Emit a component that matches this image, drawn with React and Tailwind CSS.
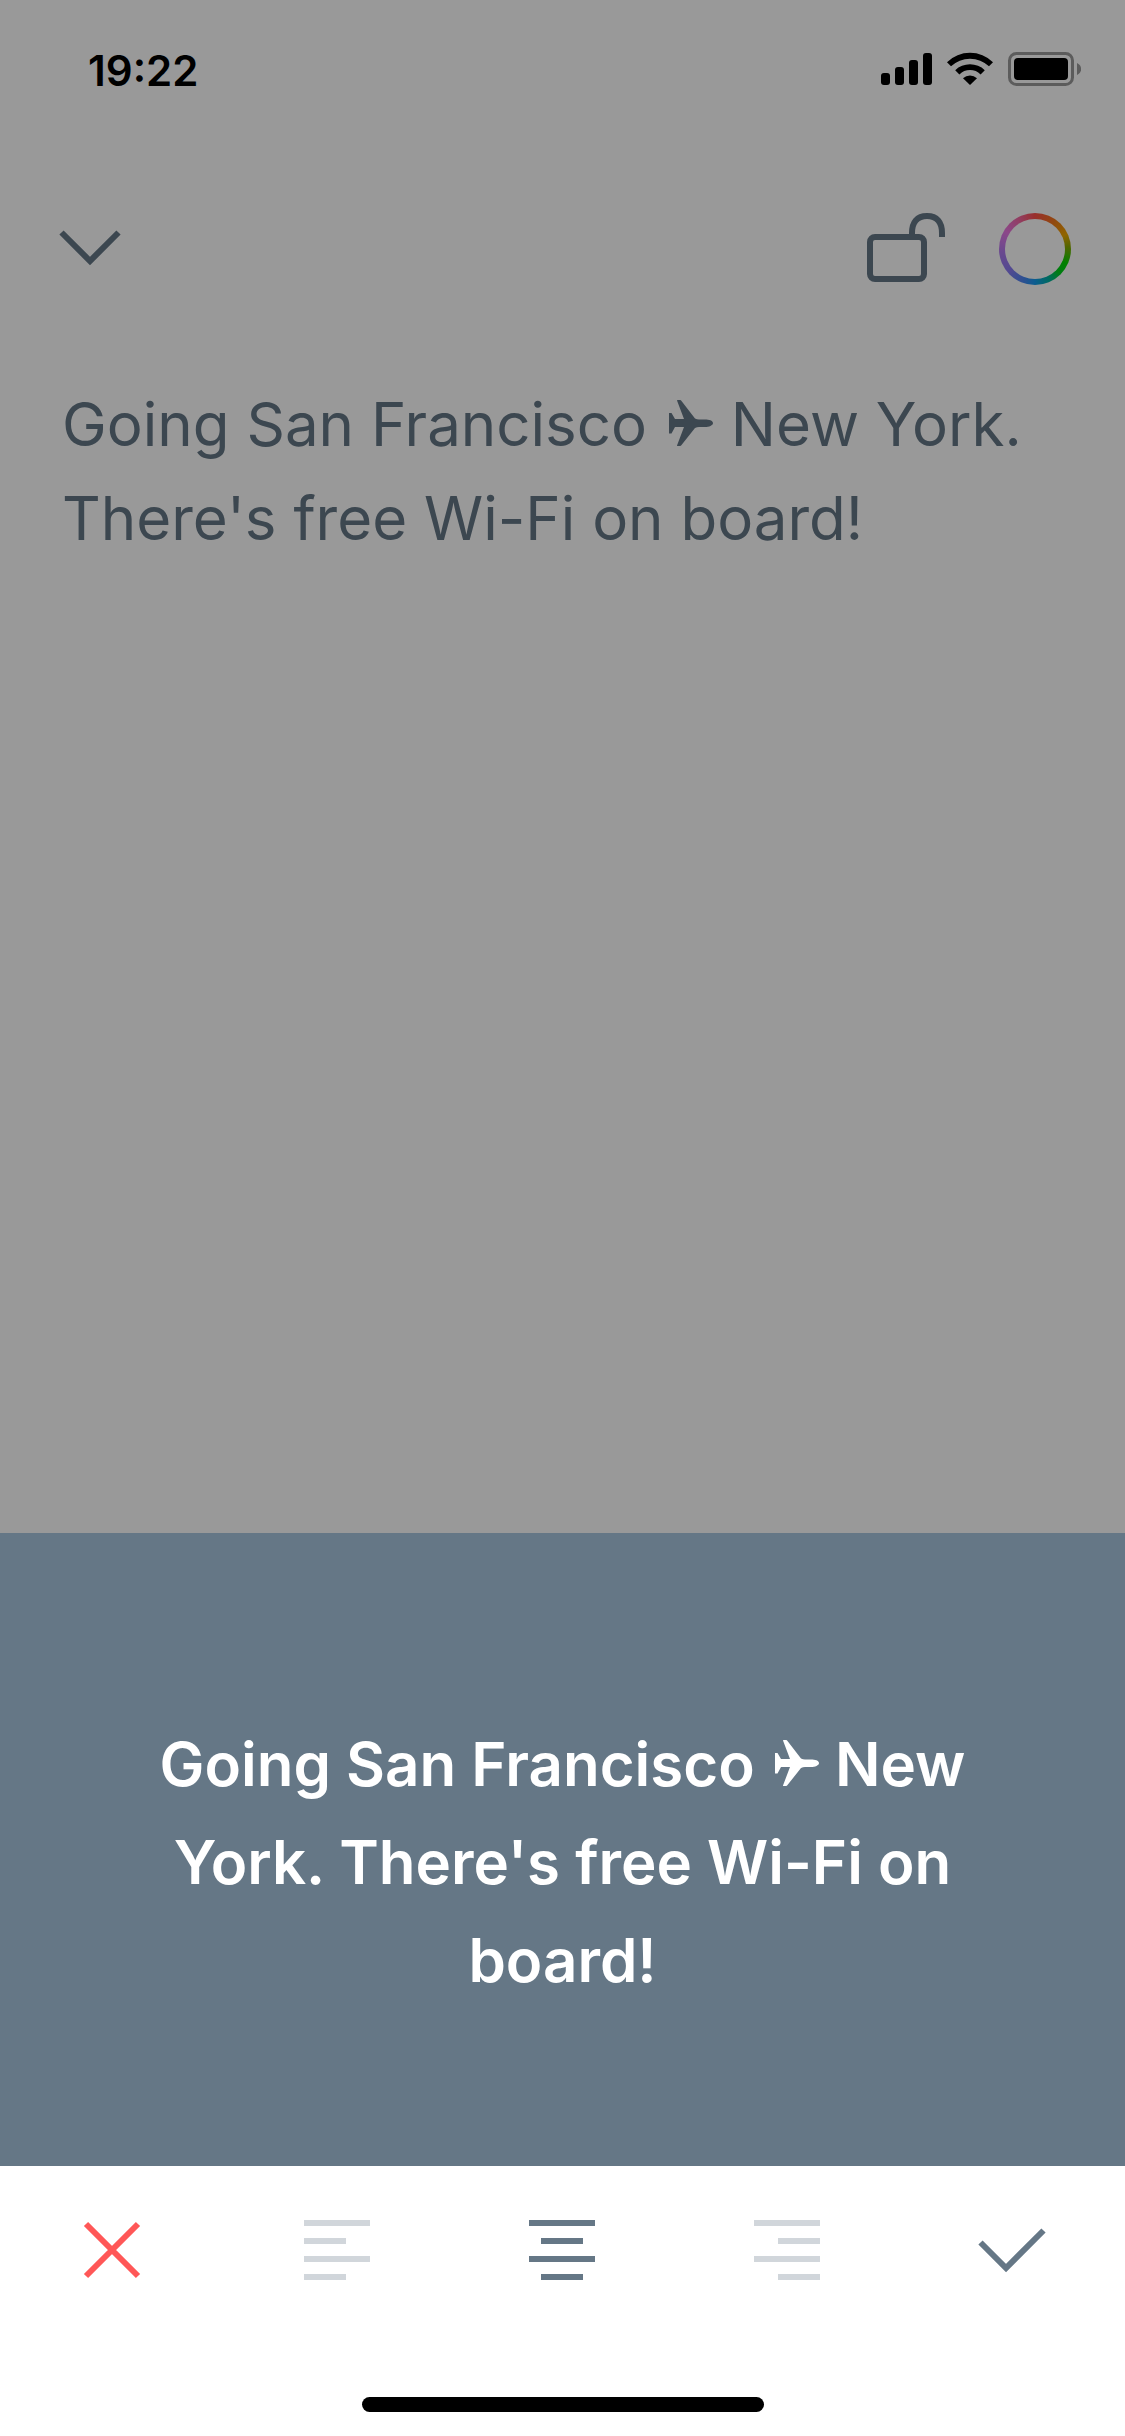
import { useState } from 'react';
import clsx from 'clsx';

const NOTE = "Going San Francisco ✈ New York. There's free Wi-Fi on board!";

const ALIGNMENTS = [
    { name: 'left', label: 'Align left', shortX: 1, text: 'text-left' },
    { name: 'center', label: 'Align center', shortX: 13, text: 'text-center' },
    { name: 'right', label: 'Align right', shortX: 25, text: 'text-right' },
];

const StatusBar = () => (
    <div className="flex items-center justify-between pt-11 pl-[88px] pr-11">
        <span className="text-[42px] leading-[54px] font-semibold text-black">19:22</span>

        <svg className="w-[200px] h-[54px]" viewBox="881 44 200 54" aria-hidden="true">
            {/* Signal */}
            <rect x="881" y="73" width="9" height="12" rx="3" />
            <rect x="895" y="67" width="9" height="18" rx="3" />
            <rect x="909" y="60" width="9" height="25" rx="3" />
            <rect x="923" y="53" width="9" height="32" rx="3" />

            {/* Wi-Fi */}
            <path d="M947 62.2A33 33 0 0 1 993 62.2L989 66.3A27.5 27.5 0 0 0 951 66.3Z" />
            <path d="M955.2 70.2A21.4 21.4 0 0 1 984.8 70.2L980.6 74.4A15.2 15.2 0 0 0 959.4 74.4Z" />
            <path d="M963 78.2A10.5 10.5 0 0 1 977 78.2L970 85Z" />

            {/* Battery */}
            <rect x="1009.5" y="53.5" width="63" height="31" rx="7" fill="none" stroke="#000" strokeOpacity="0.4" strokeWidth="3" />
            <rect x="1014" y="58" width="54" height="22" rx="4" />
            <path d="M1077 63C1082.500 65.500 1082.500 72.500 1077 75Z" fillOpacity="0.4" />
        </svg>
    </div>
);

const Header = () => (
    <header className="flex items-center justify-between pt-[112px] px-[54px] text-[#657786]">
        <button aria-label="Close note">
            <svg className="w-[72px] h-[78px]" viewBox="54 210 72 78" fill="none" stroke="currentColor" strokeWidth="6">
                <path d="M61.500 232.500L90 261L118.500 232.500" />
            </svg>
        </button>

        <div className="flex items-center gap-[54px]">
            <button aria-label="Lock note">
                <svg className="w-[78px] h-[78px]" viewBox="867 210 78 78" fill="none" stroke="currentColor" strokeWidth="6">
                    <rect x="870" y="237" width="54" height="42" rx="5" />
                    <path d="M912 235V233C912 222 917 216 927 216S942 222 942 233V237" />
                </svg>
            </button>
            <button
                aria-label="Note color"
                className="size-[72px] rounded-full p-[6px] bg-[conic-gradient(#ff4f4b,#f27a1a_35deg,#f0a800_65deg,#8fa800_85deg,#00d600_115deg,#00cf20_135deg,#00b2a0_155deg,#149bf0_180deg,#4a86f2_200deg,#8a7bf2_230deg,#b078ee_265deg,#e878e6_300deg,#f268a8_330deg,#ff4f4b)]"
            >
                <span className="block size-full rounded-full bg-white"></span>
            </button>
        </div>
    </header>
);

const Plane = () => (
    <svg
        className="inline-block align-baseline ml-1 w-[46px] h-[46px]"
        viewBox="-1 0 46 46"
        fill="currentColor"
        role="img"
        aria-label="✈"
    >
        <path d="M0 13H2.500L6 19H15L8 0.500Q8 0 8.500 0H11Q12 0 12.500 1L26 18.500Q28 19.500 30 19.500H36C40 19.500 44 20.500 44 23S40 27 36 27H30Q28 27 26 28L12.500 45Q12 46 11 46H8.500Q8 46 8 45.500L15 27H6L2.500 33.500H0Z" />
    </svg>
);

// Note text with the airplane drawn in the text color
const NoteText = ({ text }) => {
    const [before, after] = text.split('✈');
    return (
        <>
            {before}
            {after !== undefined && <Plane />}
            {after}
        </>
    );
};

const AlignIcon = ({ shortX }) => (
    <svg className="size-[69px]" viewBox="0 0 69 69" fill="currentColor">
        <rect x="1" y="5" width="66" height="6" />
        <rect x={shortX} y="23" width="42" height="6" />
        <rect x="1" y="41" width="66" height="6" />
        <rect x={shortX} y="59" width="42" height="6" />
    </svg>
);

const App = () => {
    const [align, setAlign] = useState('center');

    const current = ALIGNMENTS.find((a) => a.name === align);

    return (
        <div className="min-h-screen flex flex-col bg-white font-['Inter',sans-serif]">
            {/* Note, dimmed while the share sheet is open */}
            <main className="relative flex-1">
                <StatusBar />
                <Header />
                <p className="mt-[89px] px-[62px] text-[60px] leading-[94px] text-[#657786]">
                    <NoteText text={NOTE} />
                </p>
                <div className="absolute inset-0 bg-black/40"></div>
            </main>

            {/* Preview */}
            <section className="flex flex-col justify-center h-[633px] px-[150px] pt-6 bg-[#657786]">
                <p className={clsx('text-[60px] leading-[98px] font-semibold text-white', current.text)}>
                    <NoteText text={NOTE} />
                </p>
            </section>

            {/* Toolbar */}
            <footer className="bg-white pt-[49px] pb-6">
                <div className="grid grid-cols-5 justify-items-center">
                    <button aria-label="Cancel" className="text-[#ff5757]">
                        <svg className="size-[69px]" viewBox="0 0 69 69" stroke="currentColor" strokeWidth="6">
                            <path d="M8 9L60 61M60 9L8 61" />
                        </svg>
                    </button>
                    {ALIGNMENTS.map((a) => (
                        <button
                            key={a.name}
                            aria-label={a.label}
                            aria-pressed={a.name === align}
                            className={a.name === align ? 'text-[#657786]' : 'text-[#d1d6db]'}
                            onClick={() => setAlign(a.name)}
                        >
                            <AlignIcon shortX={a.shortX} />
                        </button>
                    ))}
                    <button aria-label="Done" className="text-[#657786]">
                        <svg className="size-[69px]" viewBox="0 0 69 69" fill="none" stroke="currentColor" strokeWidth="6">
                            <path d="M2.500 27.500L28 53L65.500 15.500" />
                        </svg>
                    </button>
                </div>
                <div className="mt-[113px] mx-auto w-[402px] h-[15px] rounded-full bg-black"></div>
            </footer>
        </div>
    );
};

export default App;
